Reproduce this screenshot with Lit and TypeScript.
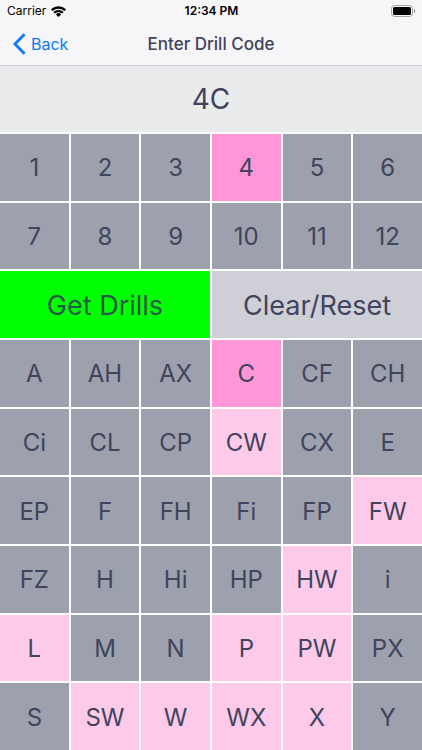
import { LitElement, html, css } from "lit";
import { customElement, state } from "lit/decorators.js";
import { classMap } from "lit/directives/class-map.js";

const NUMBERS = ["1", "2", "3", "4", "5", "6", "7", "8", "9", "10", "11", "12"];
const LETTERS = [
  "A", "AH", "AX", "C", "CF", "CH",
  "Ci", "CL", "CP", "CW", "CX", "E",
  "EP", "F", "FH", "Fi", "FP", "FW",
  "FZ", "H", "Hi", "HP", "HW", "i",
  "L", "M", "N", "P", "PW", "PX",
  "S", "SW", "W", "WX", "X", "Y",
];
const AVAILABLE = new Set(["CW", "FW", "HW", "L", "P", "PW", "SW", "W", "WX", "X"]);

@customElement("status-bar")
export class StatusBar extends LitElement {
  static styles = css`
    :host {
      display: grid;
      grid-template-columns: 1fr auto 1fr;
      align-items: center;
      height: 22px;
      padding: 0 6px 0 7px;
      color: #000;
      font-size: 12px;
      line-height: 16px;
    }
    .carrier {
      display: flex;
      align-items: center;
      gap: 5px;
    }
    .time {
      font-weight: 600;
    }
    .battery {
      justify-self: end;
    }
    svg {
      display: block;
    }
  `;

  render() {
    return html`
      <div class="carrier">
        <span>Carrier</span>
        <svg width="15" height="11" viewBox="0 0 15 11" aria-hidden="true">
          <g fill="none" stroke="#000" stroke-width="2.3">
            <path d="M0.8 4.2 A9.6 9.6 0 0 1 14.2 4.2" />
            <path d="M3.2 6.8 A6.1 6.1 0 0 1 11.8 6.8" />
          </g>
          <path d="M7.5 11 L4.9 8.4 A3.6 3.6 0 0 1 10.1 8.4 Z" />
        </svg>
      </div>
      <span class="time">12:34 PM</span>
      <svg class="battery" width="25" height="12" viewBox="0 0 25 12" aria-hidden="true">
        <rect x="0.5" y="0.5" width="21" height="11" rx="3" fill="none" stroke="#a3a2a3" />
        <rect x="2" y="2" width="18" height="8" rx="1.5" />
        <path d="M23 4 A2.2 2.2 0 0 1 23 8 Z" fill="#8a898a" />
      </svg>
    `;
  }
}

@customElement("nav-bar")
export class NavBar extends LitElement {
  static styles = css`
    :host {
      display: grid;
      grid-template-columns: 1fr auto 1fr;
      align-items: center;
      height: 43px;
      padding: 0 13px;
    }
    .back {
      display: flex;
      align-items: center;
      gap: 5px;
      justify-self: start;
      color: #0a7aff;
      font-size: 16px;
      line-height: 20px;
      text-decoration: none;
    }
    .title {
      margin: 0;
      color: #40445d;
      font-size: 17px;
      font-weight: 500;
      line-height: 20px;
    }
  `;

  render() {
    return html`
      <a class="back" href="#">
        <svg width="13" height="22" viewBox="0 0 13 22" aria-hidden="true">
          <path d="M11.6 1.3 L1.9 11 L11.6 20.7" fill="none" stroke="#0a7aff" stroke-width="2.8" />
        </svg>
        <span>Back</span>
      </a>
      <h1 class="title">Enter Drill Code</h1>
    `;
  }
}

@customElement("app-root")
export class AppRoot extends LitElement {
  @state() private number = "4";
  @state() private letter = "C";

  static styles = css`
    :host {
      display: flex;
      flex-direction: column;
      min-height: 100vh;
      background: #fff;
      font-family: Inter, "Liberation Sans", sans-serif;
    }
    header {
      background: #f6f5f7;
      border-bottom: 1px solid #cfcfd3;
    }
    main {
      flex: 1;
      display: grid;
      grid-template-columns: repeat(6, 1fr);
      grid-template-rows: 66px;
      grid-auto-rows: minmax(48px, 1fr);
      gap: 2px;
    }
    .code {
      grid-column: 1 / -1;
      display: flex;
      align-items: center;
      justify-content: center;
      background: #eaebed;
      color: #3f435b;
      font-size: 28px;
      line-height: 32px;
    }
    button {
      min-width: 0;
      margin: 0;
      padding: 2px 0 0;
      border: 0;
      border-radius: 0;
      background: #9da1ae;
      color: #40445c;
      font: inherit;
      font-size: 24px;
      line-height: 32px;
    }
    .available {
      background: #fecaea;
    }
    .selected {
      background: #fe96d8;
    }
    .action {
      grid-column: span 3;
      font-size: 27px;
    }
    .go {
      background: #00ff00;
      color: #26574a;
    }
    .clear {
      background: #cfcfd8;
    }
  `;

  private reset() {
    this.number = "";
    this.letter = "";
  }

  private key(label: string, current: string, pick: () => void) {
    const selected = label === current;
    return html`<button
      type="button"
      class=${classMap({ selected, available: !selected && AVAILABLE.has(label) })}
      aria-pressed=${selected ? "true" : "false"}
      @click=${pick}
    >${label}</button>`;
  }

  render() {
    return html`
      <header>
        <status-bar></status-bar>
        <nav-bar></nav-bar>
      </header>
      <main>
        <output class="code">${this.number}${this.letter}</output>
        ${NUMBERS.map((n) => this.key(n, this.number, () => (this.number = n)))}
        <button type="button" class="action go">Get Drills</button>
        <button type="button" class="action clear" @click=${this.reset}>Clear/Reset</button>
        ${LETTERS.map((l) => this.key(l, this.letter, () => (this.letter = l)))}
      </main>
    `;
  }
}
